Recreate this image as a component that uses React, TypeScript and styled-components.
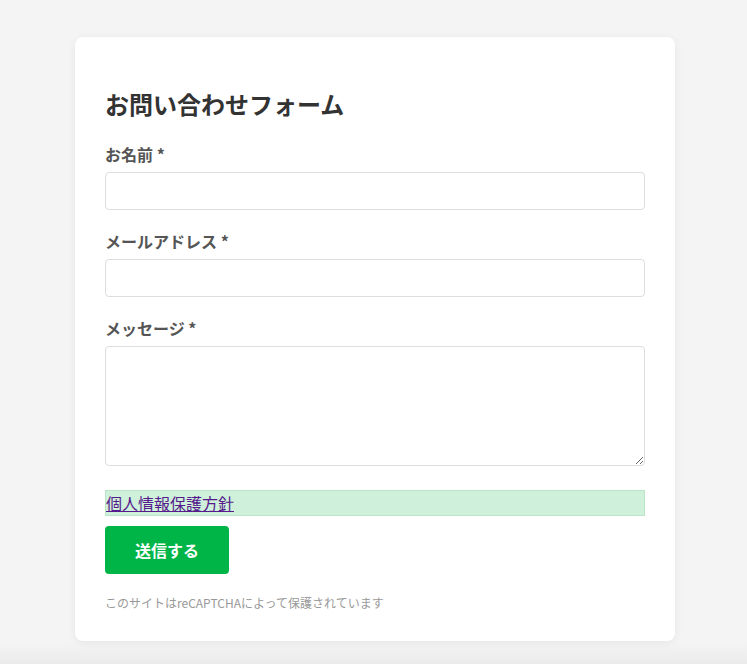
import React from 'react'
import styled, { createGlobalStyle } from 'styled-components'

const GlobalStyle = createGlobalStyle`
  html, body {
    margin: 0;
    padding: 0;
  }
  body {
    font-family: "Noto Sans CJK JP", "Noto Sans", sans-serif;
    background: #f4f4f4;
  }
`

const Page = styled.div`
  min-height: 664px;
  box-sizing: border-box;
  padding: 37px 0 0 3px;
  display: flex;
  justify-content: center;
  align-items: flex-start;
  background: linear-gradient(to bottom, #f4f4f4 0, #f4f4f4 642px, #ebebeb 664px);
`

const Card = styled.form`
  width: 600px;
  box-sizing: border-box;
  background: #fff;
  border-radius: 8px;
  box-shadow: 0 2px 10px rgba(0, 0, 0, 0.06);
  padding: 30px 30px 29px;
`

const Title = styled.h2`
  margin: 20px 0 21px;
  font-size: 24px;
  line-height: 34px;
  font-weight: 700;
  color: #333;
`

const Field = styled.div`
  display: flex;
  flex-direction: column;
  margin-bottom: 19px;
`

const Label = styled.label`
  font-size: 16px;
  line-height: 24px;
  font-weight: 700;
  color: #555;
  margin-bottom: 6px;
`

const Input = styled.input`
  box-sizing: border-box;
  width: 100%;
  height: 38px;
  border: 1px solid #ddd;
  border-radius: 4px;
  padding: 0 10px;
  font: inherit;
  font-size: 15px;
  outline: none;
`

const TextArea = styled.textarea`
  box-sizing: border-box;
  width: 100%;
  height: 120px;
  border: 1px solid #ddd;
  border-radius: 4px;
  padding: 8px 10px;
  font: inherit;
  font-size: 15px;
  outline: none;
`

const PolicyBox = styled.div`
  margin-top: 24px;
  background: #cff0da;
  border: 1px solid #b8e6c6;
  line-height: 24px;
  font-size: 16px;
`

const PolicyLink = styled.a`
  color: #551a8b;
  text-decoration: underline;
`

const SubmitButton = styled.button`
  margin-top: 10px;
  width: 124px;
  height: 48px;
  border: none;
  border-radius: 4px;
  background: #00b548;
  color: #fff;
  font: inherit;
  font-size: 16px;
  font-weight: 700;
  cursor: pointer;
`

const Notice = styled.p`
  margin: 20px 0 0;
  font-size: 12px;
  line-height: 18px;
  color: #999;
`

export default function App() {
  return (
    <>
      <GlobalStyle />
      <Page>
        <Card onSubmit={(e) => e.preventDefault()}>
          <Title>お問い合わせフォーム</Title>
          <Field>
            <Label htmlFor="name">お名前 *</Label>
            <Input id="name" type="text" />
          </Field>
          <Field>
            <Label htmlFor="email">メールアドレス *</Label>
            <Input id="email" type="email" />
          </Field>
          <Field>
            <Label htmlFor="message">メッセージ *</Label>
            <TextArea id="message" />
          </Field>
          <PolicyBox>
            <PolicyLink href="#privacy">個人情報保護方針</PolicyLink>
          </PolicyBox>
          <SubmitButton type="submit">送信する</SubmitButton>
          <Notice>このサイトはreCAPTCHAによって保護されています</Notice>
        </Card>
      </Page>
    </>
  )
}
